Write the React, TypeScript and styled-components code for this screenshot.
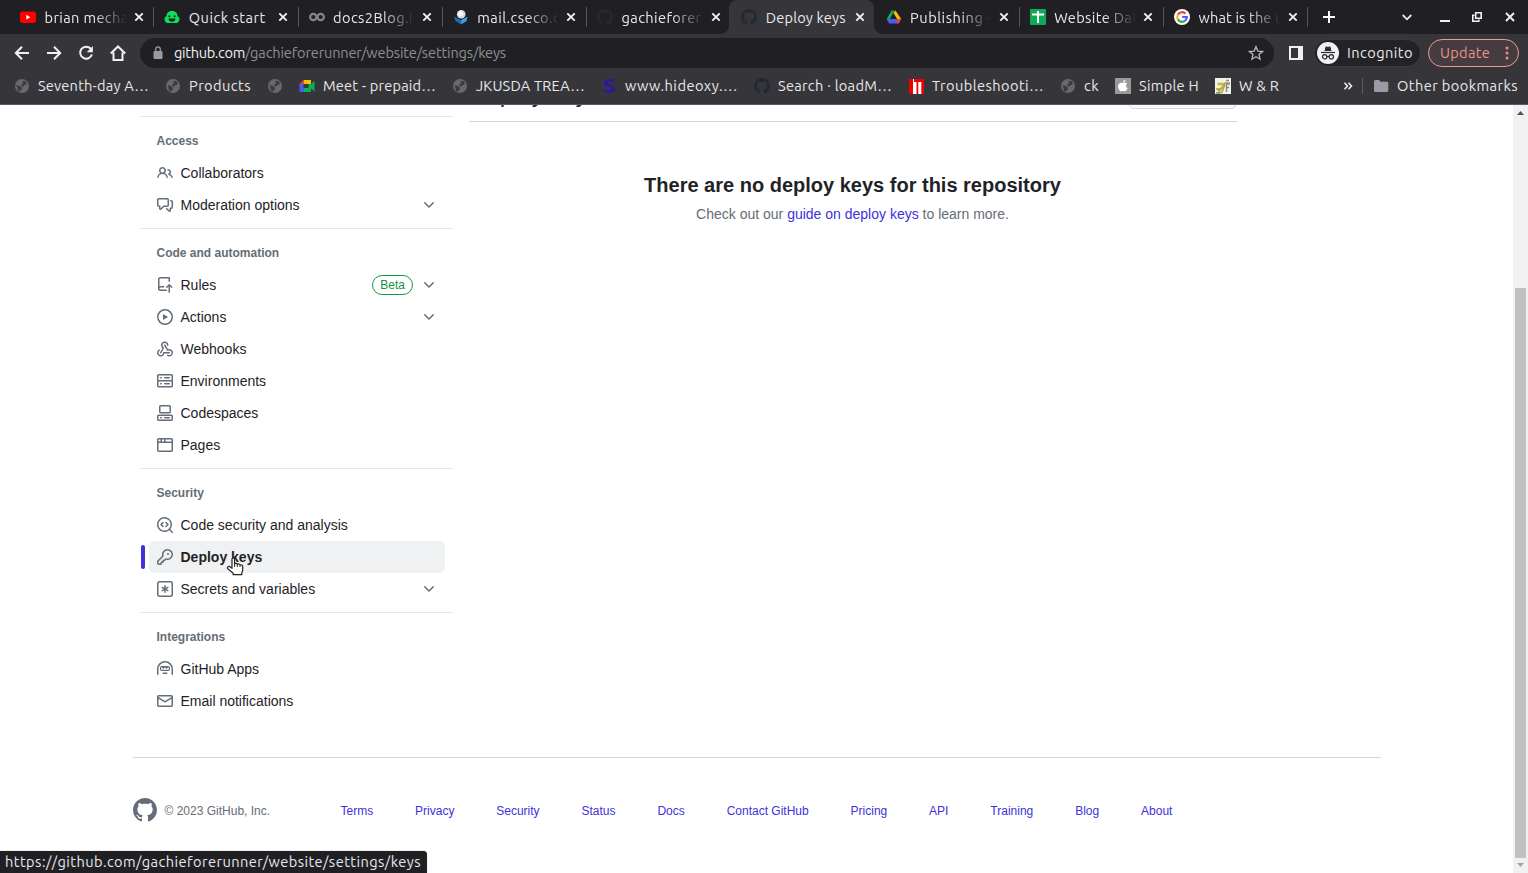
import React, { useLayoutEffect, useRef, useState } from 'react';
import styled, { createGlobalStyle } from 'styled-components';

const GlobalStyle = createGlobalStyle`
  * { box-sizing: border-box; }
  html, body { margin: 0; padding: 0; overflow: hidden; background: #fff; }
`;

const uiFont = '"Ubuntu", "Noto Sans", "Open Sans", sans-serif';
const pageFont = '"Liberation Sans", Arial, sans-serif';

const Window = styled.div`
  width: 1528px;
  height: 873px;
  display: flex;
  flex-direction: column;
  overflow: hidden;
  position: relative;
  background: #fff;
`;

/* ---------- fitted chrome text ---------- */

const Fitted = styled.span`
  display: inline-block;
  white-space: pre;
`;

function Fit({ text, width }: { text: string; width: number }) {
  const ref = useRef<HTMLSpanElement>(null);
  const [spacing, setSpacing] = useState(0);
  useLayoutEffect(() => {
    if (!ref.current) return;
    const natural = ref.current.getBoundingClientRect().width;
    setSpacing((width - natural) / text.length);
  }, [text, width]);
  return (
    <Fitted ref={ref} style={{ letterSpacing: spacing }}>
      {text}
    </Fitted>
  );
}

/* ---------- tab strip ---------- */

const TabStrip = styled.div`
  height: 34px;
  background: #202024;
  display: flex;
  padding-left: 8px;
  font: 14.6px/33px ${uiFont};
  color: #e8e8ea;
`;

const Tab = styled.div<{ $active?: boolean; $line?: boolean }>`
  position: relative;
  width: 144.25px;
  height: 34px;
  flex: none;
  display: flex;
  align-items: center;
  padding-left: 12px;
  border-radius: 8px 8px 0 0;
  background: ${(p) => (p.$active ? '#36363a' : 'transparent')};
  &::before {
    content: '';
    display: ${(p) => (p.$active ? 'block' : 'none')};
    position: absolute;
    left: -8px;
    bottom: 0;
    width: 8px;
    height: 8px;
    background: radial-gradient(circle at 0 0, transparent 7.5px, #36363a 8px);
  }
  &::after {
    content: '';
    position: absolute;
    ${(p) =>
      p.$active
        ? `right: -8px; bottom: 0; width: 8px; height: 8px;
           background: radial-gradient(circle at 100% 0, transparent 7.5px, #36363a 8px);`
        : p.$line
          ? 'right: -2px; top: 7px; width: 1px; height: 20px; background: #55555a;'
          : 'display: none;'}
  }
`;

const TabTitle = styled.div<{ $fade?: boolean }>`
  width: 82px;
  margin-left: 8.5px;
  overflow: hidden;
  white-space: nowrap;
  ${(p) => p.$fade && 'mask-image: linear-gradient(90deg, #000 60%, transparent 100%);'}
`;

const CloseIcon = styled.svg`
  margin-left: 7px;
  width: 10px;
  height: 10px;
  flex: none;
`;

const StripIcon = styled.svg<{ $gap: number }>`
  flex: none;
  align-self: center;
  margin-left: ${(p) => p.$gap}px;
`;

/* ---------- toolbar ---------- */

const Toolbar = styled.div`
  height: 36px;
  background: #36363a;
  display: flex;
  align-items: center;
  padding: 2px 9px 0 14px;
  font: 14.6px/28px ${uiFont};
  color: #e8e8ea;
`;

const NavButtons = styled.div`
  display: flex;
  gap: 16px;
  width: 126px;
  flex: none;
`;

const Omnibox = styled.div`
  width: 1134px;
  height: 30px;
  flex: none;
  border-radius: 15px;
  background: #202024;
  display: flex;
  align-items: center;
  padding: 0 10px 0 12px;
  color: #8d8e92;
`;

const Url = styled.div`
  flex: 1;
  margin-left: 10px;
  line-height: 30px;
`;

const Host = styled.span`
  color: #f0f0f2;
`;

const IncognitoChip = styled.div`
  width: 106px;
  height: 28px;
  flex: none;
  margin-left: 12px;
  border-radius: 14px;
  background: #232327;
  display: flex;
  align-items: center;
  gap: 8px;
  padding-left: 2px;
  border: 1px solid #3c3c40;
  border-left: 0;
`;

const UpdateChip = styled.div`
  width: 91px;
  height: 28px;
  flex: none;
  margin-left: 7px;
  border: 1px solid #ee9a92;
  border-radius: 14px;
  background: #453c40;
  color: #e8938b;
  line-height: 26px;
  display: flex;
  align-items: center;
  padding-left: 11px;
`;

/* ---------- bookmarks ---------- */

const BookmarkBar = styled.div`
  height: 35px;
  background: #36363a;
  border-bottom: 1px solid #5a5a5e;
  display: flex;
  align-items: center;
  padding: 0 0 2px 14px;
  font: 14.6px/32px ${uiFont};
  color: #e8e8ea;
`;

const Bookmark = styled.div<{ $w: number }>`
  width: ${(p) => p.$w}px;
  flex: none;
  display: flex;
  align-items: center;
  gap: 8px;
  white-space: nowrap;
`;

const BarDivider = styled.div`
  width: 1px;
  height: 16px;
  background: #5b5b60;
  margin: 0 11px 0 9px;
`;

/* ---------- page ---------- */

const Viewport = styled.div`
  flex: 1;
  min-height: 0;
  display: flex;
  background: #fff;
`;

const Page = styled.div`
  flex: 1;
  font: 14px/20px ${pageFont};
  color: #1f2328;
  overflow: hidden;
`;

const Columns = styled.div`
  display: flex;
  gap: 16px;
  height: 652px;
  padding-left: 141px;
`;

const Sidebar = styled.nav`
  width: 312px;
  padding-top: 11px;
`;

const Group = styled.section`
  border-top: 1px solid #e6e8eb;
  padding: 8px 8px 7px;
`;

const GroupTitle = styled.h3`
  margin: 0;
  padding-left: 7.5px;
  font-size: 12px;
  line-height: 32px;
  font-weight: 700;
  color: #656d76;
`;

const NavItem = styled.a<{ $current?: boolean }>`
  position: relative;
  height: 32px;
  display: flex;
  align-items: center;
  padding: 0 8px;
  border-radius: 6px;
  font-weight: ${(p) => (p.$current ? 700 : 400)};
  background: ${(p) => (p.$current ? '#f0f1f3' : 'transparent')};
  color: #1f2328;
  &::before {
    content: '';
    display: ${(p) => (p.$current ? 'block' : 'none')};
    position: absolute;
    left: -8px;
    top: 4px;
    width: 4px;
    height: 24px;
    border-radius: 6px;
    background: #4031dc;
  }
`;

const NavLabel = styled.span`
  flex: 1;
  margin-left: 7.5px;
`;

const BetaLabel = styled.span`
  height: 20px;
  padding: 0 7px;
  margin-right: 8px;
  border: 1px solid #109a45;
  border-radius: 10px;
  font-size: 12px;
  line-height: 18px;
  color: #1a8f45;
`;

const Octicon = styled.svg`
  flex: none;
  fill: #656d7a;
`;

const Main = styled.main`
  width: 768px;
`;

const Subhead = styled.header`
  height: 17px;
  border-bottom: 1px solid #d5d8dd;
  display: flex;
  justify-content: space-between;
  align-items: flex-end;
  overflow: hidden;
`;

const SubheadTitle = styled.h2`
  margin: 0 0 9px;
  font-size: 24px;
  font-weight: 400;
  line-height: 36px;
`;

const SubheadButton = styled.div`
  width: 109px;
  height: 28px;
  margin-bottom: 12px;
  border: 1px solid #d5d8dd;
  border-radius: 6px;
  background: #f9fafb;
`;

const Blankslate = styled.div`
  width: 767px;
  padding-top: 48px;
  text-align: center;
`;

const BlankTitle = styled.h3`
  margin: 0 0 4px;
  font-size: 20px;
  line-height: 30px;
  font-weight: 700;
`;

const BlankText = styled.p`
  margin: 0;
  line-height: 21px;
  color: #656d76;
`;

const Link = styled.a`
  color: #4031dc;
`;

const Footer = styled.footer`
  margin-left: 133px;
  width: 1248px;
  border-top: 1px solid #d5d8dd;
  padding-top: 40px;
  display: flex;
  align-items: flex-start;
  font-size: 12px;
  line-height: 24px;
  color: #656d76;
`;

const Copyright = styled.span`
  width: 176px;
  margin-left: 7.5px;
  padding-top: 1px;
`;

const FooterLinks = styled.div`
  width: 832px;
  display: flex;
  justify-content: space-between;
  padding-top: 1px;
`;

const Scrollbar = styled.div`
  width: 15px;
  background: #f1f1f1;
  display: flex;
  flex-direction: column;
  align-items: center;
`;

const Track = styled.div`
  flex: 1;
  width: 11px;
  padding-top: 168px;
`;

const Thumb = styled.div`
  height: 570px;
  background: #c1c1c1;
`;

const StatusBubble = styled.div`
  position: absolute;
  left: 0;
  bottom: 0;
  width: 427px;
  height: 22px;
  padding-left: 5px;
  border-radius: 0 4px 0 0;
  background: #202024;
  box-shadow: 0 0 1px #666;
  color: #e8e8ea;
  font: 14.6px/22px ${uiFont};
`;

const Pointer = styled.svg`
  position: absolute;
  left: 226px;
  top: 557px;
`;

/* ---------- icon paths ---------- */

const paths = {
  people:
    'M2 5.5a3.5 3.5 0 1 1 5.898 2.549 5.508 5.508 0 0 1 3.034 4.084.75.75 0 1 1-1.482.235 4 4 0 0 0-7.9 0 .75.75 0 0 1-1.482-.236A5.507 5.507 0 0 1 3.102 8.05 3.493 3.493 0 0 1 2 5.5ZM11 4a3.001 3.001 0 0 1 2.22 5.018 5.01 5.01 0 0 1 2.56 3.012.749.749 0 0 1-.885.954.752.752 0 0 1-.549-.514 3.507 3.507 0 0 0-2.522-2.372.75.75 0 0 1-.574-.73v-.352a.75.75 0 0 1 .416-.672A1.5 1.5 0 0 0 11 5.5.75.75 0 0 1 11 4Zm-5.5-.5a2 2 0 1 0-.001 3.999A2 2 0 0 0 5.5 3.5Z',
  discussion:
    'M1.75 1h8.5c.966 0 1.75.784 1.75 1.75v5.5A1.75 1.75 0 0 1 10.25 10H7.061l-2.574 2.573A1.458 1.458 0 0 1 2 11.543V10h-.25A1.75 1.75 0 0 1 0 8.25v-5.5C0 1.784.784 1 1.75 1ZM1.5 2.75v5.5c0 .138.112.25.25.25h1a.75.75 0 0 1 .75.75v2.19l2.72-2.72a.749.749 0 0 1 .53-.22h3.5a.25.25 0 0 0 .25-.25v-5.5a.25.25 0 0 0-.25-.25h-8.5a.25.25 0 0 0-.25.25Zm13 2a.25.25 0 0 0-.25-.25h-.5a.75.75 0 0 1 0-1.5h.5c.966 0 1.75.784 1.75 1.75v5.5A1.75 1.75 0 0 1 14.25 12H14v1.543a1.458 1.458 0 0 1-2.487 1.03L9.22 12.28a.749.749 0 0 1 .326-1.275.749.749 0 0 1 .734.215l2.22 2.22v-2.19a.75.75 0 0 1 .75-.75h1a.25.25 0 0 0 .25-.25Z',
  repoPush:
    'M1 2.5A2.5 2.5 0 0 1 3.5 0h8.75a.75.75 0 0 1 .75.75v3.5a.75.75 0 0 1-1.5 0V1.5h-8a1 1 0 0 0-1 1v6.708A2.493 2.493 0 0 1 3.5 9h3.25a.75.75 0 0 1 0 1.5H3.5a1 1 0 0 0 0 2h5.75a.75.75 0 0 1 0 1.5H3.5A2.5 2.5 0 0 1 1 11.5ZM12.78 7.22l2.5 2.5a.75.75 0 0 1-1.06 1.06l-1.22-1.22v5.69a.75.75 0 0 1-1.5 0V9.56l-1.22 1.22a.75.75 0 0 1-1.06-1.06l2.5-2.5a.75.75 0 0 1 1.06 0Z',
  play: 'M8 0a8 8 0 1 1 0 16A8 8 0 0 1 8 0ZM1.5 8a6.5 6.5 0 1 0 13 0 6.5 6.5 0 0 0-13 0Zm4.879-2.773 4.264 2.559a.25.25 0 0 1 0 .428l-4.264 2.559A.25.25 0 0 1 6 10.559V5.442a.25.25 0 0 1 .379-.215Z',
  webhook:
    'M5.5 4.25a2.25 2.25 0 0 1 4.5 0 .75.75 0 0 0 1.5 0 3.75 3.75 0 1 0-6.14 2.889l-2.272 4.258a.75.75 0 0 0 1.324.706L7 7.25a.75.75 0 0 0-.309-1.015A2.25 2.25 0 0 1 5.5 4.25ZM7.364 3.607a.75.75 0 0 1 1.03.257l2.608 4.349a3.75 3.75 0 1 1-.628 6.785.75.75 0 0 1 .752-1.299 2.25 2.25 0 1 0-.033-3.88.75.75 0 0 1-1.03-.256L7.107 4.636a.75.75 0 0 1 .257-1.03ZM2.9 8.776A.75.75 0 0 1 2.625 9.8 2.25 2.25 0 1 0 6 11.75a.75.75 0 0 1 .75-.751h5.5a.75.75 0 0 1 0 1.5H7.425a3.751 3.751 0 1 1-5.55-3.998.75.75 0 0 1 1.024.274Z',
  server:
    'M1.75 1h12.5c.966 0 1.75.784 1.75 1.75v4c0 .372-.116.717-.314 1 .198.283.314.628.314 1v4a1.75 1.75 0 0 1-1.75 1.75H1.75A1.75 1.75 0 0 1 0 12.75v-4c0-.358.109-.707.314-1a1.739 1.739 0 0 1-.314-1v-4C0 1.784.784 1 1.75 1ZM1.5 2.75v4c0 .138.112.25.25.25h12.5a.25.25 0 0 0 .25-.25v-4a.25.25 0 0 0-.25-.25H1.75a.25.25 0 0 0-.25.25Zm.25 5.75a.25.25 0 0 0-.25.25v4c0 .138.112.25.25.25h12.5a.25.25 0 0 0 .25-.25v-4a.25.25 0 0 0-.25-.25ZM7 4.75A.75.75 0 0 1 7.75 4h4.5a.75.75 0 0 1 0 1.5h-4.5A.75.75 0 0 1 7 4.75ZM7.75 10h4.5a.75.75 0 0 1 0 1.5h-4.5a.75.75 0 0 1 0-1.5ZM3 4.75A.75.75 0 0 1 3.75 4h.5a.75.75 0 0 1 0 1.5h-.5A.75.75 0 0 1 3 4.75ZM3.75 10h.5a.75.75 0 0 1 0 1.5h-.5a.75.75 0 0 1 0-1.5Z',
  codespaces:
    'M0 11.25c0-.966.784-1.75 1.75-1.75h12.5c.966 0 1.75.784 1.75 1.75v3A1.75 1.75 0 0 1 14.25 16H1.75A1.75 1.75 0 0 1 0 14.25Zm2-9.5C2 .784 2.784 0 3.75 0h8.5C13.216 0 14 .784 14 1.75v5a1.75 1.75 0 0 1-1.75 1.75h-8.5A1.75 1.75 0 0 1 2 6.75Zm1.75-.25a.25.25 0 0 0-.25.25v5c0 .138.112.25.25.25h8.5a.25.25 0 0 0 .25-.25v-5a.25.25 0 0 0-.25-.25Zm-2 9.5a.25.25 0 0 0-.25.25v3c0 .138.112.25.25.25h12.5a.25.25 0 0 0 .25-.25v-3a.25.25 0 0 0-.25-.25ZM7 12.75a.75.75 0 0 1 .75-.75h4.5a.75.75 0 0 1 0 1.5h-4.5a.75.75 0 0 1-.75-.75Zm-4 0a.75.75 0 0 1 .75-.75h.5a.75.75 0 0 1 0 1.5h-.5a.75.75 0 0 1-.75-.75Z',
  browser:
    'M0 2.75C0 1.784.784 1 1.75 1h12.5c.966 0 1.75.784 1.75 1.75v10.5A1.75 1.75 0 0 1 14.25 15H1.75A1.75 1.75 0 0 1 0 13.25ZM14.5 6h-13v7.25c0 .138.112.25.25.25h12.5a.25.25 0 0 0 .25-.25Zm-6-3.5v2h6V2.75a.25.25 0 0 0-.25-.25ZM5 2.5v2h2v-2Zm-3.25 0a.25.25 0 0 0-.25.25V4.5h2v-2Z',
  codescan:
    'M8.47 4.97a.75.75 0 0 0 0 1.06L9.94 7.5 8.47 8.97a.75.75 0 1 0 1.06 1.06l2-2a.75.75 0 0 0 0-1.06l-2-2a.75.75 0 0 0-1.06 0ZM6.53 6.03a.75.75 0 0 0-1.06-1.06l-2 2a.75.75 0 0 0 0 1.06l2 2a.75.75 0 1 0 1.06-1.06L5.06 7.5l1.47-1.47ZM12.246 13.307a7.501 7.501 0 1 1 1.06-1.06l2.474 2.473a.75.75 0 1 1-1.06 1.06ZM1.5 7.5a6.002 6.002 0 0 0 3.608 5.504 6.002 6.002 0 0 0 6.486-1.117.748.748 0 0 1 .292-.293A6 6 0 1 0 1.5 7.5Z',
  key: 'M10.5 0a5.499 5.499 0 1 1-1.288 10.848l-.932.932a.749.749 0 0 1-.53.22H7v.75a.749.749 0 0 1-.22.53l-.5.5a.749.749 0 0 1-.53.22H5v.75a.749.749 0 0 1-.22.53l-.5.5a.749.749 0 0 1-.53.22h-2A1.75 1.75 0 0 1 0 14.25v-2c0-.199.079-.389.22-.53l4.932-4.932A5.5 5.5 0 0 1 10.5 0Zm-4 5.5c-.001.431.069.86.205 1.269a.75.75 0 0 1-.181.768L1.5 12.56v1.69c0 .138.112.25.25.25h1.69l.06-.06v-1.19a.75.75 0 0 1 .75-.75h1.19l.06-.06v-1.19a.75.75 0 0 1 .75-.75h1.19l1.023-1.025a.75.75 0 0 1 .768-.18A4 4 0 1 0 6.5 5.5ZM11 6a1 1 0 1 1 0-2 1 1 0 0 1 0 2Z',
  asterisk:
    'M0 2.75A2.75 2.75 0 0 1 2.75 0h10.5A2.75 2.75 0 0 1 16 2.75v10.5A2.75 2.75 0 0 1 13.25 16H2.75A2.75 2.75 0 0 1 0 13.25ZM2.75 1.5c-.69 0-1.25.56-1.25 1.25v10.5c0 .69.56 1.25 1.25 1.25h10.5c.69 0 1.25-.56 1.25-1.25V2.75c0-.69-.56-1.25-1.25-1.25ZM8 4a.75.75 0 0 1 .75.75V6.7l1.69-.975a.75.75 0 0 1 .75 1.3L9.5 8l1.69.976a.75.75 0 0 1-.75 1.298L8.75 9.3v1.951a.75.75 0 0 1-1.5 0V9.299l-1.69.976a.75.75 0 0 1-.75-1.3L6.5 8l-1.69-.975a.75.75 0 0 1 .75-1.3l1.69.976V4.75A.75.75 0 0 1 8 4Z',
  hubot:
    'M0 8a8 8 0 1 1 16 0v5.25a.75.75 0 0 1-1.5 0V8a6.5 6.5 0 1 0-13 0v5.25a.75.75 0 0 1-1.5 0V8Zm5.5 4.25a.75.75 0 0 1 .75-.75h3.5a.75.75 0 0 1 0 1.5h-3.5a.75.75 0 0 1-.75-.75ZM3 6.75C3 5.784 3.784 5 4.75 5h6.5c.966 0 1.75.784 1.75 1.75v1.5A1.75 1.75 0 0 1 11.25 10h-6.5A1.75 1.75 0 0 1 3 8.25ZM4.75 6.2a.55.55 0 0 0-.55.55v1.5c0 .3.25.55.55.55h6.5a.55.55 0 0 0 .55-.55v-1.5a.55.55 0 0 0-.55-.55ZM4.900 6.200h3.100l-1.550 1.900ZM8 6.200h3.100l-1.550 1.900Z',
  mail: 'M1.75 2h12.5c.966 0 1.75.784 1.75 1.75v8.5A1.75 1.75 0 0 1 14.25 14H1.75A1.75 1.75 0 0 1 0 12.25v-8.5C0 2.784.784 2 1.75 2ZM1.5 12.251c0 .138.112.25.25.25h12.5a.25.25 0 0 0 .25-.25V5.809L8.38 9.397a.75.75 0 0 1-.76 0L1.5 5.809v6.442Zm13-8.181v-.32a.25.25 0 0 0-.25-.25H1.75a.25.25 0 0 0-.25.25v.32L8 7.88Z',
  chevron:
    'M12.78 5.22a.749.749 0 0 1 0 1.06l-4.25 4.25a.749.749 0 0 1-1.06 0L3.22 6.28a.749.749 0 1 1 1.06-1.06L8 8.939l3.72-3.719a.749.749 0 0 1 1.06 0Z',
  github:
    'M8 0c4.42 0 8 3.58 8 8a8.013 8.013 0 0 1-5.45 7.59c-.4.08-.55-.17-.55-.38 0-.27.01-1.13.01-2.2 0-.75-.25-1.23-.54-1.48 1.78-.2 3.65-.88 3.65-3.95 0-.88-.31-1.59-.82-2.15.08-.2.36-1.02-.08-2.12 0 0-.67-.22-2.2.82-.64-.18-1.32-.27-2-.27-.68 0-1.36.09-2 .27-1.53-1.03-2.2-.82-2.2-.82-.44 1.1-.16 1.92-.08 2.12-.51.56-.82 1.28-.82 2.15 0 3.06 1.86 3.75 3.64 3.95-.23.2-.44.55-.51 1.07-.46.21-1.61.55-2.33-.66-.15-.24-.6-.83-1.23-.82-.67.01-.27.38.01.53.34.19.73.9.82 1.13.16.45.68 1.31 2.69.94 0 .67.01 1.3.01 1.49 0 .21-.15.45-.55.38A7.995 7.995 0 0 1 0 8c0-4.42 3.58-8 8-8Z',
};

type IconName = keyof typeof paths;

const Icon = ({ name, size = 16 }: { name: IconName; size?: number }) => (
  <Octicon width={size} height={size} viewBox="0 0 16 16">
    <path d={paths[name]} />
  </Octicon>
);

/* ---------- favicons ---------- */

const favicons: Record<string, React.ReactNode> = {
  youtube: (
    <>
      <rect x="0" y="2.5" width="16" height="11.5" rx="2.5" fill="#f00" />
      <path d="M6.300 5.800v4.800L10.300 8.200z" fill="#fff" />
    </>
  ),
  robot: (
    <>
      <path d="M2.5 7C2.5 3.500 5 2 8 2s5.500 1.500 5.500 5l1.800 1.500c.5 2-.3 5.500-2.800 5.500h-9C1 14 .2 10.500.7 8.500z" fill="#0be05a" />
      <circle cx="5.400" cy="7.200" r="1" fill="#15251b" />
      <circle cx="10.600" cy="7.200" r="1" fill="#15251b" />
      <path d="M4.500 9.500h7c0 2-1.500 3.300-3.500 3.300S4.500 11.500 4.500 9.500z" fill="#15251b" />
    </>
  ),
  colab: (
    <g fill="none" stroke="#83868a" strokeWidth="2.200">
      <circle cx="4.300" cy="8" r="3.200" />
      <circle cx="11.700" cy="8" r="3.200" />
    </g>
  ),
  mailbox: (
    <>
      <path d="M1 6.500h13.500L8.200 11z" fill="#1b1b1e" />
      <path d="M1 7.500 8.200 11v4.500L2.500 12z" fill="#1a6dba" />
      <path d="M8.200 11 14.500 7.500 13.500 12 8.200 15.500z" fill="#3fa0ea" />
      <circle cx="8.200" cy="5.300" r="4.300" fill="#dcdcdc" />
      <circle cx="7.600" cy="4.600" r="2.600" fill="#f8f8f8" />
    </>
  ),
  github: <path d={paths.github} fill="#24292f" />,
  drive: (
    <>
      <path d="M5.500 1.500h3L5 8l-2.500 5L.8 10z" fill="#0fa958" />
      <path d="M5.500 1.500h4L8 5z" fill="#06853b" />
      <path d="M9.500 1.500 15.200 10h-4L7.500 4z" fill="#fbbc04" />
      <path d="M4.300 10h7.500l-1 4.500H3.200L.8 10.500z" fill="#4f5bf0" />
      <path d="M11.300 10h3.900l-2.400 4.500h-2z" fill="#ea4335" />
    </>
  ),
  sheets: (
    <>
      <rect width="16" height="16" rx="1" fill="#0fa958" />
      <path d="M2 5.500h12M8 2v12" stroke="#fff" strokeWidth="2" />
    </>
  ),
  google: (
    <>
      <circle cx="8" cy="8" r="8" fill="#fff" />
      <g fill="none" strokeWidth="2.200">
        <path d="M11.400 4.600A4.800 4.800 0 0 0 3.900 5.600" stroke="#ea4335" />
        <path d="M3.900 5.600a4.800 4.800 0 0 0 0 4.800" stroke="#fbbc05" />
        <path d="M3.900 10.400a4.800 4.800 0 0 0 7.300 1.200" stroke="#34a853" />
        <path d="M11.200 11.600A4.800 4.800 0 0 0 12.800 8H8.200" stroke="#4a5cf5" />
      </g>
    </>
  ),
  globe: (
    <>
      <circle cx="8" cy="8" r="7" fill="#66696d" />
      <path d="M8.300 3.300 11 2.800l1.800 2-.6 1.900-2 .4-.6 1.500-1.900-.3-.6-1.600 1.900-1.300zM2.300 7.300l3.200.5 2.600 1.900-.2 1.700-1.700 1.200-.4 1.400-2-1.500-.3-2.400z" fill="#3b3b40" />
    </>
  ),
  meet: (
    <>
      <path d="M4.500 2H12v4H4.500z" fill="#fbbc04" />
      <path d="M4.500 2v4H.5z" fill="#ea4335" />
      <path d="M.5 6h4v8h-3a1 1 0 0 1-1-1z" fill="#4a5cf5" />
      <path d="M4.500 10H12v4H4.500zM9.500 6H12l3.500-3v10.500L12 10.500H9.500z" fill="#0fae58" />
    </>
  ),
  sLetter: (
    <text x="8" y="15" textAnchor="middle" fontFamily="DejaVu Sans" fontWeight="700" fontSize="19" fill="#2a1a9a">
      S
    </text>
  ),
  tt: (
    <>
      <rect x="1" y="1" width="15" height="15" fill="#e00" />
      <path d="M5 4h3.500v12H5zM10.300 4h3v12h-3z" fill="#fff" />
      <path d="M5 1h1v3H5z" fill="#fff" />
    </>
  ),
  apple: (
    <>
      <rect width="16" height="16" fill="#999" />
      <path d="M8.300 5c1-.7 2.900-.6 3.800.7-1.600 1.100-1.500 3.500.5 4.400-.6 1.600-1.700 3.200-2.700 3.200-.8 0-1-.4-1.900-.4s-1.200.4-2 .4C4.600 13.300 3 10.500 3 8.300 3 5 6 4 8.300 5zM8.100 4.300C8 3 9.100 1.900 10.400 1.700c.1 1.400-1 2.600-2.300 2.600z" fill="#fff" />
    </>
  ),
  wr: (
    <>
      <rect width="16" height="16" fill="#f3f2ea" />
      <path d="M2.500 6h5.500v3L3 13.500" fill="none" stroke="#c9b82c" strokeWidth="2.600" />
      <path d="M1 11h5M3 14.500h4L9 9l1-4h5" fill="none" stroke="#a8a04a" strokeWidth="1.300" />
      <path d="M11.500 14V6H15M11.500 9.500H14M1 15h4M11 2.500h3" fill="none" stroke="#83898a" strokeWidth="1.400" />
    </>
  ),
};

const Favicon = ({ name }: { name: string }) => (
  <svg width="16" height="16" viewBox="0 0 16 16">
    {favicons[name]}
  </svg>
);

/* ---------- data ---------- */

const tabs = [
  { icon: 'youtube', title: 'brian mecha', width: 84, fade: true, line: true },
  { icon: 'robot', title: 'Quick start', width: 77, line: true },
  { icon: 'colab', title: 'docs2Blog.i', width: 80, fade: true, line: true },
  { icon: 'mailbox', title: 'mail.cseco.c', width: 83, fade: true, line: true },
  { icon: 'github', title: 'gachieforer', width: 80, fade: true },
  { icon: 'github', title: 'Deploy keys', width: 80, active: true },
  { icon: 'drive', title: 'Publishing -', width: 82, fade: true, line: true },
  { icon: 'sheets', title: 'Website Dat', width: 84, fade: true, line: true },
  { icon: 'google', title: 'what is the u', width: 85, fade: true, line: true },
];

const bookmarks = [
  { icon: 'globe', title: 'Seventh-day A…', text: 111, w: 151 },
  { icon: 'globe', title: 'Products', text: 62, w: 102 },
  { icon: 'globe', title: '', text: 0, w: 32 },
  { icon: 'meet', title: 'Meet - prepaid…', text: 113, w: 153 },
  { icon: 'globe', title: 'JKUSDA TREA…', text: 109, w: 149 },
  { icon: 'sLetter', title: 'www.hideoxy.…', text: 113, w: 153 },
  { icon: 'github', title: 'Search · loadM…', text: 114, w: 154 },
  { icon: 'tt', title: 'Troubleshooti…', text: 112, w: 152 },
  { icon: 'globe', title: 'ck', text: 15, w: 55 },
  { icon: 'apple', title: 'Simple H', text: 60, w: 100 },
  { icon: 'wr', title: 'W & R', text: 40, w: 128 },
];

type Item = { icon: IconName; label: string; more?: boolean; beta?: boolean; current?: boolean };

const groups: { title: string; items: Item[] }[] = [
  {
    title: 'Access',
    items: [
      { icon: 'people', label: 'Collaborators' },
      { icon: 'discussion', label: 'Moderation options', more: true },
    ],
  },
  {
    title: 'Code and automation',
    items: [
      { icon: 'repoPush', label: 'Rules', more: true, beta: true },
      { icon: 'play', label: 'Actions', more: true },
      { icon: 'webhook', label: 'Webhooks' },
      { icon: 'server', label: 'Environments' },
      { icon: 'codespaces', label: 'Codespaces' },
      { icon: 'browser', label: 'Pages' },
    ],
  },
  {
    title: 'Security',
    items: [
      { icon: 'codescan', label: 'Code security and analysis' },
      { icon: 'key', label: 'Deploy keys', current: true },
      { icon: 'asterisk', label: 'Secrets and variables', more: true },
    ],
  },
  {
    title: 'Integrations',
    items: [
      { icon: 'hubot', label: 'GitHub Apps' },
      { icon: 'mail', label: 'Email notifications' },
    ],
  },
];

const footerLinks = [
  'Terms', 'Privacy', 'Security', 'Status', 'Docs', 'Contact GitHub',
  'Pricing', 'API', 'Training', 'Blog', 'About',
];

/* ---------- sections ---------- */

const Tabs = () => (
  <TabStrip>
    {tabs.map((t, i) => (
      <Tab key={i} $active={t.active} $line={t.line}>
        <Favicon name={t.icon} />
        <TabTitle $fade={t.fade}>
          <Fit text={t.title} width={t.width} />
        </TabTitle>
        <CloseIcon viewBox="0 0 10 10">
          <path d="M1.300 1.300l7.400 7.400M8.700 1.300L1.300 8.700" stroke="#f1f1f3" strokeWidth="1.900" />
        </CloseIcon>
      </Tab>
    ))}
    <StripIcon $gap={16.75} width="12" height="12" viewBox="0 0 12 12">
      <path d="M6 0v12M0 6h12" stroke="#fff" strokeWidth="2" />
    </StripIcon>
    <StripIcon $gap={67} width="10" height="7" viewBox="0 0 10 7">
      <path d="M.7 1 5 5.300 9.300 1" fill="none" stroke="#e8e8ea" strokeWidth="1.800" />
    </StripIcon>
    <StripIcon $gap={28} width="10" height="10" viewBox="0 0 10 10">
      <path d="M0 9h10" stroke="#f1f1f3" strokeWidth="2" />
    </StripIcon>
    <StripIcon $gap={22} width="10" height="10" viewBox="0 0 10 10">
      <path d="M3.700.8h5.500v5.500H3.700zM2.500 3.300H.8v6h6V7.500" fill="none" stroke="#f1f1f3" strokeWidth="1.600" />
    </StripIcon>
    <StripIcon $gap={23} width="10" height="10" viewBox="0 0 10 10">
      <path d="M1 1l8 8M9 1L1 9" stroke="#f1f1f3" strokeWidth="1.900" />
    </StripIcon>
  </TabStrip>
);

const Navigation = () => (
  <Toolbar>
    <NavButtons>
      <svg width="16" height="16" viewBox="0 0 16 16" fill="none" stroke="#f1f1f3" strokeWidth="2">
        <path d="M15 8H2.500M8 1.700 1.800 8 8 14.300" />
      </svg>
      <svg width="16" height="16" viewBox="0 0 16 16" fill="none" stroke="#f1f1f3" strokeWidth="2">
        <path d="M1 8h12.500M8 1.700 14.200 8 8 14.300" />
      </svg>
      <svg width="16" height="16" viewBox="0 0 16 16" fill="none" stroke="#f1f1f3" strokeWidth="2">
        <path d="M12.700 3.700A6 6 0 1 0 13.900 9.500" />
        <path d="M14.900 1v6.200H8.700z" fill="#f1f1f3" stroke="none" />
      </svg>
      <svg width="16" height="16" viewBox="0 0 16 16" fill="none" stroke="#f1f1f3" strokeWidth="2">
        <path d="M3.500 7.500V15h9V7.500M.8 8.500 8 1.500l7.200 7" />
      </svg>
    </NavButtons>
    <Omnibox>
      <svg width="12" height="14" viewBox="0 0 12 14">
        <path d="M2 5.500h8v7H2z" fill="#9a9ba0" stroke="#9a9ba0" strokeLinejoin="round" />
        <path d="M3.700 5.500V3.200a2.300 2.300 0 0 1 4.600 0v2.300" fill="none" stroke="#9a9ba0" strokeWidth="1.300" />
      </svg>
      <Url>
        <Host><Fit text="github.com" width={71} /></Host>
        <Fit text="/gachieforerunner/website/settings/keys" width={261} />
      </Url>
      <svg width="16" height="16" viewBox="0 0 16 16">
        <path d="m8 1.700 1.900 4.400 4.700.4-3.600 3.100 1.100 4.600L8 11.800l-4.100 2.400L5 9.600 1.400 6.500l4.700-.4z" fill="none" stroke="#b6b7bb" strokeWidth="1.300" />
      </svg>
    </Omnibox>
    <StripIcon $gap={15} width="14" height="14" viewBox="0 0 14 14">
      <path d="M1 1h12v12H1z" fill="none" stroke="#f1f1f3" strokeWidth="2" />
      <path d="M9 1h4v12H9z" fill="#f1f1f3" />
    </StripIcon>
    <IncognitoChip>
      <svg width="22" height="22" viewBox="0 0 22 22">
        <circle cx="11" cy="11" r="11" fill="#f1f1f3" />
        <path d="M7.500 9 8.500 4.800c1-.5 1.500.2 2.500.2s1.500-.7 2.500-.2L14.500 9z" fill="#2a2a2e" />
        <path d="M4 10.500h14" stroke="#2a2a2e" strokeWidth="1.200" />
        <g fill="none" stroke="#2a2a2e" strokeWidth="1.200">
          <circle cx="7.700" cy="14.800" r="2.200" />
          <circle cx="14.300" cy="14.800" r="2.200" />
          <path d="M9.900 14.500h2.200" />
        </g>
      </svg>
      <Fit text="Incognito" width={66} />
    </IncognitoChip>
    <UpdateChip>
      <Fit text="Update" width={50} />
      <StripIcon $gap={15} width="4" height="14" viewBox="0 0 4 14" fill="#f28b82">
        <circle cx="2" cy="2" r="1.500" />
        <circle cx="2" cy="7" r="1.500" />
        <circle cx="2" cy="12" r="1.500" />
      </StripIcon>
    </UpdateChip>
  </Toolbar>
);

const Bookmarks = () => (
  <BookmarkBar>
    {bookmarks.map((b, i) => (
      <Bookmark key={i} $w={b.w}>
        <Favicon name={b.icon} />
        {b.title && <Fit text={b.title} width={b.text} />}
      </Bookmark>
    ))}
    <svg width="10" height="8" viewBox="0 0 10 8">
      <path d="M1.500 .8 4.500 4 1.500 7.200M5.500 .8 8.500 4 5.500 7.200" fill="none" stroke="#e8e8ea" strokeWidth="1.600" />
    </svg>
    <BarDivider />
    <Bookmark $w={150}>
      <svg width="15" height="12" viewBox="0 0 15 12">
        <path d="M0 1.500Q0 0 1.500 0H5l1.500 1.700h6.500q1.300 0 1.300 1.300v7.500q0 1.500-1.500 1.500h-11.300Q0 12 0 10.500z" fill="#9a9ba6" />
      </svg>
      <Fit text="Other bookmarks" width={121} />
    </Bookmark>
  </BookmarkBar>
);

export default function App() {
  return (
    <Window>
      <GlobalStyle />
      <Tabs />
      <Navigation />
      <Bookmarks />
      <Viewport>
        <Page>
          <Columns>
            <Sidebar>
              {groups.map((g) => (
                <Group key={g.title}>
                  <GroupTitle>{g.title}</GroupTitle>
                  {g.items.map((it) => (
                    <NavItem key={it.label} $current={it.current}>
                      <Icon name={it.icon} />
                      <NavLabel>{it.label}</NavLabel>
                      {it.beta && <BetaLabel>Beta</BetaLabel>}
                      {it.more && <Icon name="chevron" />}
                    </NavItem>
                  ))}
                </Group>
              ))}
            </Sidebar>
            <Main>
              <Subhead>
                <SubheadTitle>Deploy keys</SubheadTitle>
                <SubheadButton />
              </Subhead>
              <Blankslate>
                <BlankTitle>There are no deploy keys for this repository</BlankTitle>
                <BlankText>
                  Check out our <Link>guide on deploy keys</Link> to learn more.
                </BlankText>
              </Blankslate>
            </Main>
          </Columns>
          <Footer>
            <Icon name="github" size={24} />
            <Copyright>© 2023 GitHub, Inc.</Copyright>
            <FooterLinks>
              {footerLinks.map((l) => (
                <Link key={l}>{l}</Link>
              ))}
            </FooterLinks>
          </Footer>
        </Page>
        <Scrollbar>
          <svg width="15" height="15" viewBox="0 0 15 15">
            <path d="M4 10h7L7.500 6z" fill="#505050" />
          </svg>
          <Track>
            <Thumb />
          </Track>
          <svg width="15" height="15" viewBox="0 0 15 15">
            <path d="M4 5h7L7.500 9z" fill="#a3a3a3" />
          </svg>
        </Scrollbar>
      </Viewport>
      <Pointer width="20" height="20" viewBox="0 0 20 20">
        <path
          d="M6 2.200c0-1.600 2.600-1.600 2.600 0v4.600c.6-.8 2.400-.6 2.700.5.800-.7 2.400-.4 2.700.7 1-.5 2.700 0 2.700 1.300v3.700c0 1-.9 2-.9 3.100v1.600H7.200v-1.400L1.800 11.800c-1.200-1.800 1-3 2.200-2l2 1.500z"
          fill="#fff"
          stroke="#222"
          strokeWidth="1.200"
          strokeLinejoin="round"
        />
        <path d="M8.600 7v3M11.300 7.500V10M14 8.300V10" stroke="#222" strokeWidth="1" />
      </Pointer>
      <StatusBubble>
        <Fit text="https://github.com/gachieforerunner/website/settings/keys" width={416} />
      </StatusBubble>
    </Window>
  );
}
